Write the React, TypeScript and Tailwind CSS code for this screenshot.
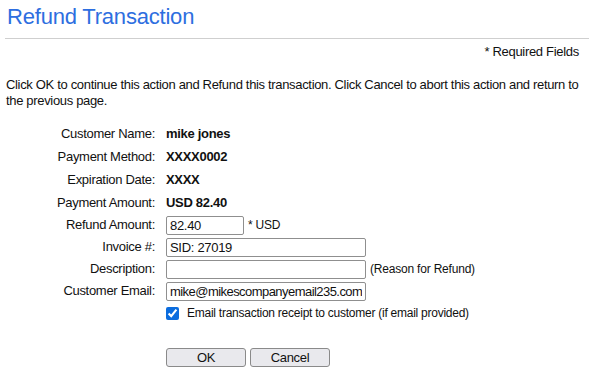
import React from "react";

const font = { fontFamily: "'Liberation Sans', Arial, sans-serif" };

function Label({ children }: { children: React.ReactNode }) {
  return <div className="text-right text-[13px] leading-[16px]">{children}</div>;
}

const inputCls =
  "h-[19px] border border-[#8f8f8f] rounded-[2px] px-[3px] text-[13px] text-[#111] outline-none bg-white";

export default function App() {
  return (
    <div className="w-[594px] h-[378px] bg-white text-[#111] overflow-hidden tracking-[-0.3px]" style={font}>
      <div className="px-[5px]">
        <h1 className="pt-[4px] pl-[2px] text-[22px] leading-[26px] text-[#2d6ee0] font-normal tracking-[-0.2px]">Refund Transaction</h1>
        <div className="mt-[8px] h-px bg-[#cfcfcf]" />
        <div className="mt-[5px] pr-[10px] text-right text-[13px] leading-[16px]">* Required Fields</div>
        <p className="mt-[17px] pl-[1px] text-[13px] leading-[16px] tracking-[-0.33px]">
          Click OK to continue this action and Refund this transaction. Click Cancel to abort this action and return to the previous page.
        </p>
      </div>
      <div className="mt-[13px] grid grid-cols-[155px_1fr] gap-x-[11px] items-center text-[13px] leading-[16px]">
        <Label>Customer Name:</Label>
        <div className="font-bold h-[23px] flex items-center">mike jones</div>
        <Label>Payment Method:</Label>
        <div className="font-bold h-[23px] flex items-center">XXXX0002</div>
        <Label>Expiration Date:</Label>
        <div className="font-bold h-[23px] flex items-center">XXXX</div>
        <Label>Payment Amount:</Label>
        <div className="font-bold h-[23px] flex items-center">USD 82.40</div>
        <Label>Refund Amount:</Label>
        <div className="h-[22px] flex items-center gap-[4px]">
          <input defaultValue="82.40" className={`${inputCls} w-[78px] tracking-[-0.3px]`} style={font} />
          <span className="text-[12px] tracking-[-0.2px]">* USD</span>
        </div>
        <Label>Invoice #:</Label>
        <div className="h-[22px] flex items-center">
          <input defaultValue="SID: 27019" className={`${inputCls} w-[200px] tracking-[-0.3px]`} style={font} />
        </div>
        <Label>Description:</Label>
        <div className="h-[22px] flex items-center gap-[4px]">
          <input defaultValue="" className={`${inputCls} w-[200px]`} style={font} />
          <span className="text-[12px] tracking-[-0.2px]">(Reason for Refund)</span>
        </div>
        <Label>Customer Email:</Label>
        <div className="h-[22px] flex items-center">
          <input defaultValue="mike@mikescompanyemail235.com" className={`${inputCls} w-[200px] tracking-[-0.55px]`} style={font} />
        </div>
        <div />
        <div className="h-[22px] flex items-center gap-[8px]">
          <input type="checkbox" defaultChecked className="w-[13px] h-[13px] m-0 accent-[#0b6cde]" />
          <span className="text-[12px] tracking-[-0.25px]">Email transaction receipt to customer (if email provided)</span>
        </div>
        <div />
        <div className="mt-[24px] flex gap-[4px]">
          <button className="w-[80px] h-[19px] border border-[#8a8a8a] rounded-[3px] bg-[#e9e9ed] text-[13px] leading-none" style={font}>OK</button>
          <button className="w-[80px] h-[19px] border border-[#8a8a8a] rounded-[3px] bg-[#e9e9ed] text-[13px] leading-none" style={font}>Cancel</button>
        </div>
      </div>
    </div>
  );
}
